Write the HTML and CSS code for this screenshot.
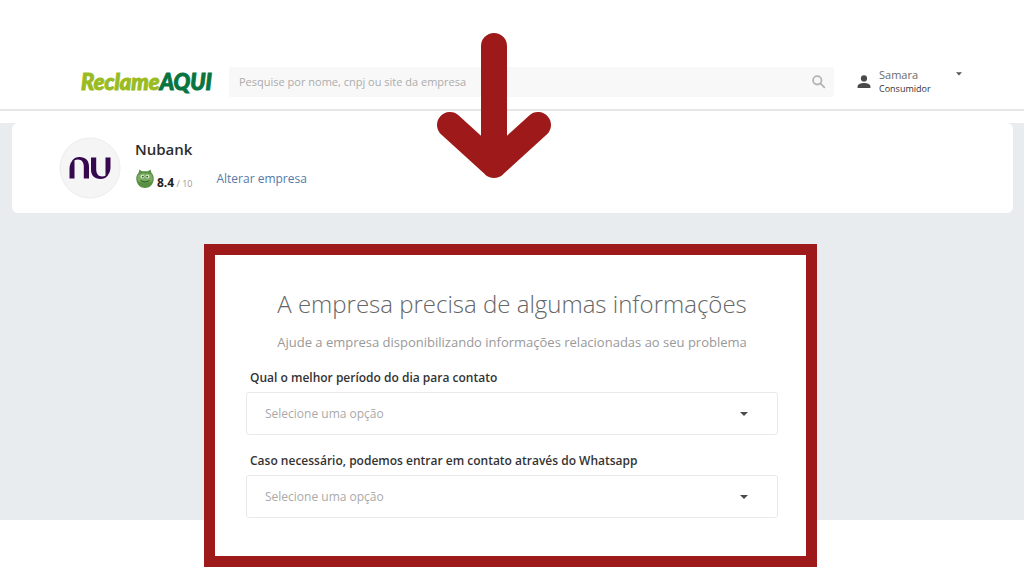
FILE: index.html
```html
<!DOCTYPE html>
<html lang="pt-BR">
<head>
  <meta charset="utf-8">
  <meta name="viewport" content="width=device-width, initial-scale=1">
  <title>ReclameAQUI</title>
  <link rel="stylesheet" href="styles.css">
</head>
<body>
  <header class="topbar">
    <a class="logo" href="#"><span class="logo-light">Reclame</span><span class="logo-dark">AQUI</span></a>
    <form class="search" role="search">
      <input class="search-input" type="search" aria-label="Pesquisar empresa" placeholder="Pesquise por nome, cnpj ou site da empresa">
      <button class="search-button" type="button" aria-label="Pesquisar">
        <svg width="14" height="14" viewBox="0 0 14 14" fill="none" stroke="#b4b4b4" stroke-width="1.800"><circle cx="5.300" cy="5.300" r="4.200"/><path d="M8.400 8.400 12.800 12.800"/></svg>
      </button>
    </form>
    <button class="user" type="button">
      <svg class="user-icon" width="14" height="14" viewBox="0 0 14 14" fill="#4a4a4a"><circle cx="7" cy="3.4" r="3.1"/><path d="M.6 13v-1.6C.6 9.200 4.200 8 7 8s6.400 1.200 6.400 3.400V13z"/></svg>
      <span class="user-text"><span class="user-name">Samara</span><span class="user-role">Consumidor</span></span>
      <svg class="user-caret" width="6" height="4" viewBox="0 0 6 4" fill="#555"><path d="M0 .3h6L3 3.500z"/></svg>
    </button>
  </header>

  <main class="page">
    <section class="company">
      <svg class="avatar" width="62" height="62" viewBox="0 0 62 62" role="img" aria-label="Nubank">
        <circle cx="31" cy="31" r="30" fill="#f5f5f6" stroke="#ebedee"/>
        <g fill="#36094f">
          <path d="M10.500 41.500V32c0-3.500 1-6.500 3-8.500l2 .5V41.500z"/>
          <path d="M13 24c1.500-2.700 4-4 7.500-4 6 0 9.500 3.500 9.500 9.500v12h-5.200V30c0-4.800-2-7.500-6-7.500-2 0-3.500.8-4.500 2.500z"/>
          <path d="M51.500 20.500V30c0 3.500-1 6.500-3 8.500l-2-.5V20.500z"/>
          <path d="M49 38c-1.500 2.700-4 4-7.500 4-6 0-9.500-3.500-9.500-9.500v-12h5.200V32c0 4.800 2 7.500 6 7.500 2 0 3.500-.8 4.500-2.500z"/>
        </g>
      </svg>
      <div class="company-info">
        <h1 class="company-name">Nubank</h1>
        <div class="company-row">
          <div class="rating">
            <svg width="20" height="20" viewBox="0 0 20 20" aria-hidden="true">
              <path d="M4.500 .5 7 2.200h6l2.500-1.700 1 3.500C18.300 5.500 19 8 18.700 10.500 18.200 15.500 14.500 19 10 19s-8.200-3.500-8.700-8.500C1 8 1.700 5.500 3.500 4z" fill="#588f43"/>
              <path d="M3 6C5 3.500 15 3.500 17 6c1.300 3 .8 5-.5 6.500-3 1.500-10 1.500-13 0C2 11 1.800 9 3 6z" fill="#7aac62"/>
              <circle cx="7.500" cy="7.500" r="2" fill="#d6e6c8"/><circle cx="12.500" cy="7.500" r="2" fill="#d6e6c8"/>
              <circle cx="7.800" cy="7.600" r=".9" fill="#28521f"/><circle cx="12.200" cy="7.600" r=".9" fill="#28521f"/>
              <path d="M5.500 11.500c2.500 1.500 6.500 1.500 9 0" fill="none" stroke="#2f6425" stroke-width="1.400"/>
            </svg>
            <span class="score"><strong class="score-value">8.4</strong> / 10</span>
          </div>
          <a class="change-link" href="#">Alterar empresa</a>
        </div>
      </div>
    </section>

    <form class="card">
      <h2 class="card-title">A empresa precisa de algumas informações</h2>
      <p class="card-subtitle">Ajude a empresa disponibilizando informações relacionadas ao seu problema</p>
      <div class="field">
        <label class="field-label" for="period">Qual o melhor período do dia para contato</label>
        <div class="select-box">
          <select class="select" id="period"><option>Selecione uma opção</option></select>
          <svg class="select-caret" width="8" height="4" viewBox="0 0 8 4" fill="#4b4b4b"><path d="M0 0h8L4 4z"/></svg>
        </div>
      </div>
      <div class="field">
        <label class="field-label" for="whatsapp">Caso necessário, podemos entrar em contato através do Whatsapp</label>
        <div class="select-box">
          <select class="select" id="whatsapp"><option>Selecione uma opção</option></select>
          <svg class="select-caret" width="8" height="4" viewBox="0 0 8 4" fill="#4b4b4b"><path d="M0 0h8L4 4z"/></svg>
        </div>
      </div>
    </form>
  </main>

  <svg class="arrow" width="114" height="146" viewBox="0 0 114 146" fill="none" stroke="#9e1919" stroke-width="26" stroke-linecap="round" stroke-linejoin="round" aria-hidden="true">
    <path d="M57 13v119M13 92l44 40 44-40"/>
  </svg>
</body>
</html>
```
FILE: styles.css
```css
* {
  box-sizing: border-box;
}

body {
  margin: 0;
  position: relative;
  min-height: 100vh;
  background: #fff;
  color: #2d2d2d;
  font-family: "Open Sans", "Noto Sans", sans-serif;
  font-size: 12px;
}

button {
  border: 0;
  padding: 0;
  background: none;
  font: inherit;
  color: inherit;
}

.topbar {
  display: flex;
  align-items: center;
  padding: 54px 62px 0 81px;
  height: 111px;
  border-bottom: 2px solid #e6e6e7;
}

.logo {
  flex: none;
  width: 148px;
  font-family: Lato, "Open Sans", sans-serif;
  font-size: 22px;
  line-height: 28px;
  font-weight: 900;
  font-style: italic;
  text-decoration: none;
  -webkit-text-stroke: 1px;
}

.logo-light {
  color: #9abc22;
}

.logo-dark {
  color: #087540;
}

.search {
  flex: 1;
  display: flex;
  align-items: center;
  height: 30px;
  padding: 0 8px 0 10px;
  background: #f8f8f8;
  border-radius: 2px;
}

.search-input {
  flex: 1;
  min-width: 0;
  border: 0;
  padding: 0;
  background: none;
  font: inherit;
  font-size: 11px;
  outline: 0;
}

.search-input::placeholder {
  color: #acacac;
  opacity: 1;
}

.search-button {
  display: flex;
}

.user {
  flex: none;
  display: flex;
  align-items: center;
  width: 128px;
  padding-left: 23px;
  text-align: left;
}

.user-text {
  flex: 1;
  display: flex;
  flex-direction: column;
  padding-left: 8px;
}

.user-name {
  font-size: 11px;
  line-height: 14px;
  color: #6c6c6c;
}

.user-role {
  font-size: 9px;
  line-height: 13px;
  color: #333;
}

.user-caret {
  align-self: flex-start;
  margin-top: 4px;
}

.page {
  margin-top: 12px;
  padding: 0 15px 0 12px;
  background: #e8ecef;
}

.company {
  display: flex;
  align-items: center;
  height: 90px;
  margin-right: -4px;
  padding-left: 47px;
  background: #fff;
  border-radius: 6px;
}

.company-info {
  padding: 0 0 6px 14px;
}

.company-name {
  margin: 0;
  font-size: 15px;
  line-height: 20px;
  font-weight: 600;
}

.company-row {
  display: flex;
  align-items: center;
  gap: 24px;
  padding-top: 8px;
}

.rating {
  display: flex;
  align-items: center;
  gap: 2px;
}

.score {
  padding-top: 8px;
  font-size: 9px;
  line-height: 16px;
  color: #999;
}

.score-value {
  font-size: 12px;
  color: #222;
}

.change-link {
  font-size: 12px;
  line-height: 18px;
  color: #557ba9;
  text-decoration: none;
}

.page::after {
  content: "";
  display: table;
}

.card {
  width: 60%;
  min-width: 613px;
  margin: 31px auto -47px;
  padding: 31px 28px 38px 31px;
  border: 11px solid #9e1919;
  background: #fff;
}

.card-title {
  margin: 0;
  font-size: 24px;
  line-height: 36px;
  font-weight: 300;
  color: #666;
  text-align: center;
}

.card-subtitle {
  margin: 10px 0 17px;
  font-size: 13px;
  line-height: 20px;
  color: #999;
  text-align: center;
}

.field + .field {
  margin-top: 17px;
}

.field-label {
  display: block;
  padding-left: 4px;
  font-size: 12px;
  line-height: 18px;
  font-weight: 600;
  color: #333;
}

.select-box {
  display: grid;
  align-items: center;
  margin-top: 5px;
}

.select {
  grid-area: 1 / 1;
  width: 100%;
  height: 43px;
  padding: 0 40px 0 18px;
  appearance: none;
  border: 1px solid #e9e9e9;
  border-radius: 3px;
  background: #fff;
  font: inherit;
  font-size: 12px;
  color: #aaa;
}

.select-caret {
  grid-area: 1 / 1;
  justify-self: end;
  margin-right: 30px;
  pointer-events: none;
}

.arrow {
  position: absolute;
  top: 33px;
  left: calc(50% - 75px);
}
```
